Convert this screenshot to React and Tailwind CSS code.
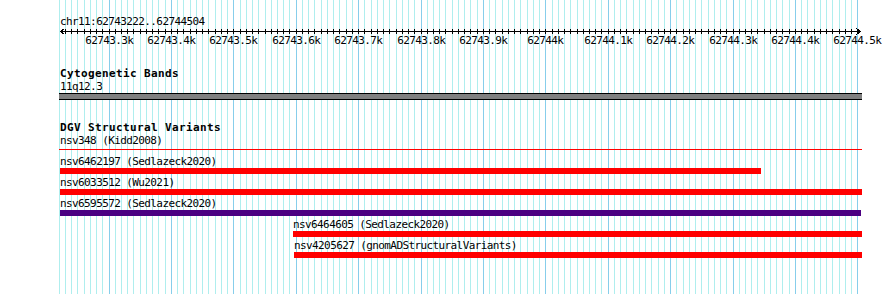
const MONO = "font-['DejaVu_Sans_Mono','Liberation_Mono',monospace] text-[11px] tracking-[-0.6px] leading-[13px] text-black";
const BOLD = "font-['DejaVu_Sans_Mono','Liberation_Mono',monospace] font-bold text-[11px] tracking-[0.38px] text-black";

// 100bp per major line, 10bp per minor line
const X0 = 108.5;
const STEP = 6.24;
const minors = Array.from({ length: 128 }, (_, i) => Math.round(X0 + STEP * (i - 7)));
const majors = Array.from({ length: 13 }, (_, k) => Math.round(X0 + STEP * 10 * k));
const majorLabels = [
  '62743.3k', '62743.4k', '62743.5k', '62743.6k', '62743.7k', '62743.8k', '62743.9k',
  '62744k', '62744.1k', '62744.2k', '62744.3k', '62744.4k', '62744.5k',
];

const variants = [
  { label: 'nsv6462197 (Sedlazeck2020)', text: 'ml-[60px]', bar: 'ml-[60px] w-[701px] bg-[#ff0000]' },
  { label: 'nsv6033512 (Wu2021)', text: 'ml-[60px]', bar: 'ml-[60px] w-[802px] bg-[#ff0000]' },
  { label: 'nsv6595572 (Sedlazeck2020)', text: 'ml-[60px]', bar: 'ml-[60px] w-[801px] bg-[#4b0082]' },
  { label: 'nsv6464605 (Sedlazeck2020)', text: 'ml-[293px]', bar: 'ml-[293px] w-[569px] bg-[#ff0000]' },
  { label: 'nsv4205627 (gnomADStructuralVariants)', text: 'ml-[294px]', bar: 'ml-[294px] w-[568px] bg-[#ff0000]' },
];

function Grid() {
  return (
    <svg className="absolute inset-0" width="890" height="294" shapeRendering="crispEdges">
      <rect x="59" y="0" width="1" height="294" fill="#afeeee" />
      {minors.map((x) => (
        <rect key={x} x={x} y="0" width="1" height="294" fill="#afeeee" />
      ))}
      {majors.map((x) => (
        <rect key={x} x={x} y="0" width="1" height="294" fill="#87ceeb" />
      ))}
    </svg>
  );
}

function Ruler() {
  return (
    <svg className="block" width="890" height="20" shapeRendering="crispEdges">
      <rect x="60" y="3" width="801" height="1" fill="#000" />
      {minors.map((x) => (
        <rect key={x} x={x} y="1" width="1" height="5" fill="#000" />
      ))}
      <path d="M60.5 3.5 L64.5 0.5 M60.5 3.5 L64.5 6.5" stroke="#000" strokeWidth="1" fill="none" />
      <path d="M860.5 3.5 L856.5 0.5 M860.5 3.5 L856.5 6.5" stroke="#000" strokeWidth="1" fill="none" />
      {majors.map((x, k) => (
        <text
          key={x}
          x={x + 0.3}
          y="16"
          textAnchor="middle"
          className="font-['DejaVu_Sans_Mono','Liberation_Mono',monospace] text-[11px] tracking-[-0.6px] fill-black"
        >
          {majorLabels[k]}
        </text>
      ))}
    </svg>
  );
}

export default function App() {
  return (
    <div className="relative h-[294px] w-[890px] overflow-hidden bg-white">
      <Grid />
      <div className="relative flex flex-col">
        <div className={`${MONO} mt-[15px] ml-[60px] h-[13px]`}>chr11:62743222..62744504</div>
        <Ruler />

        <div className={`${BOLD} mt-[20px] ml-[60px] h-[12px] leading-[12px]`}>Cytogenetic Bands</div>
        <div className={`${MONO} ml-[60px] h-[13px]`}>11q12.3</div>
        <div className="ml-[59px] h-[7px] w-[803px] border-y border-black bg-[#808080]" />

        <div className={`${BOLD} mt-[21px] ml-[60px] h-[13px] leading-[13px]`}>DGV Structural Variants</div>
        <div className={`${MONO} ml-[60px] h-[13px]`}>nsv348 (Kidd2008)</div>
        <div className="mt-[2px] ml-[59px] h-px w-[803px] bg-[#ff0000]" />

        <div className="mt-[5px] flex flex-col gap-[2px]">
          {variants.map((v) => (
            <div key={v.label} className="flex flex-col">
              <div className={`${MONO} ${v.text} h-[13px] whitespace-nowrap`}>{v.label}</div>
              <div className={`${v.bar} h-[6px]`} />
            </div>
          ))}
        </div>
      </div>
    </div>
  );
}
